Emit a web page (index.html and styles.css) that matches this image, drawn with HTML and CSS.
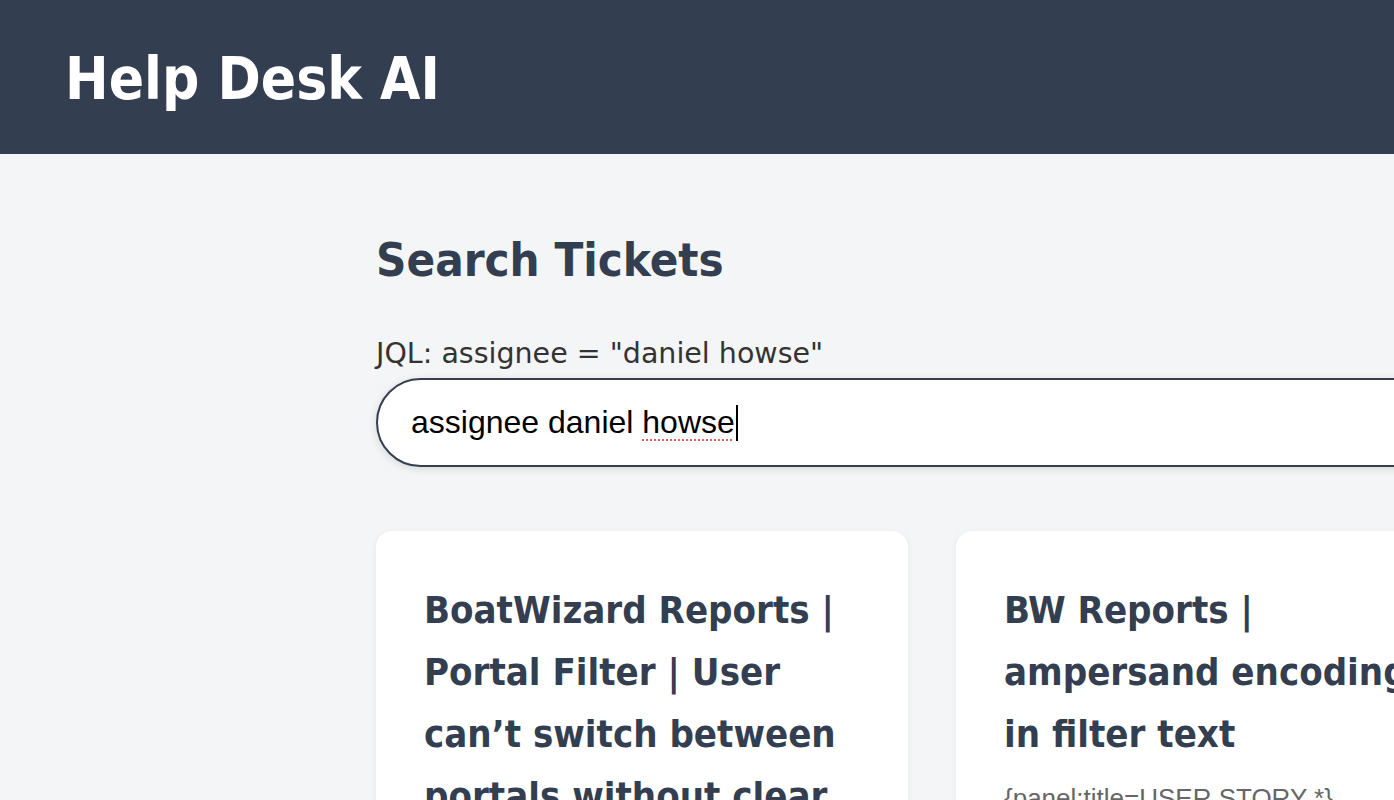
FILE: index.html
```html
<!DOCTYPE html>
<html lang="en">
<head>
<meta charset="utf-8">
<title>Help Desk AI</title>
<link rel="stylesheet" href="styles.css">
</head>
<body>
<header class="topbar">
  <h1 class="brand">Help Desk AI</h1>
</header>
<main class="content">
  <h2 class="page-title">Search Tickets</h2>
  <div class="jql">JQL: assignee = "daniel howse"</div>
  <div class="search">
    <span class="search-text">assignee daniel <span class="misspelled">howse</span></span><span class="caret"></span>
  </div>
  <section class="cards">
    <article class="card">
      <h3 class="card-title">BoatWizard Reports | Portal Filter | User can’t switch between portals without clear filters</h3>
      <p class="card-desc">Users cannot switch between portals while a filter is applied.</p>
    </article>
    <article class="card">
      <h3 class="card-title">BW Reports | ampersand encoding in filter text</h3>
      <p class="card-desc">{panel:title=USER STORY *}</p>
    </article>
  </section>
</main>
</body>
</html>
```
FILE: styles.css
```css
html, body {
  margin: 0;
  padding: 0;
  overflow: hidden;
  height: 800px;
}
body {
  background: #f4f5f7;
  font-family: "DejaVu Sans Condensed", "DejaVu Sans", sans-serif;
  color: #333e50;
}
.topbar {
  background: #333e50;
  height: 154px;
  padding: 0 65px;
  display: flex;
  align-items: center;
}
.brand {
  margin: 0;
  color: #ffffff;
  font-size: 58px;
  font-weight: bold;
  line-height: 1;
  padding-top: 4px;
}
.content {
  padding: 0 0 0 376px;
  width: 1200px;
}
.page-title {
  margin: 0;
  padding-top: 76px;
  font-size: 47px;
  line-height: 60px;
  font-weight: bold;
  color: #333e50;
}
.jql {
  margin-top: 46px;
  font-family: "DejaVu Sans", sans-serif;
  font-size: 28.5px;
  line-height: 36px;
  color: #333333;
}
.search {
  margin-top: 6px;
  height: 85px;
  border: 2px solid #333e50;
  border-radius: 46px;
  background: #ffffff;
  box-shadow: 0 2px 8px rgba(0, 0, 0, 0.12);
  display: flex;
  align-items: center;
  padding-left: 33px;
  width: 1100px;
}
.search-text {
  font-family: "Liberation Sans", Arial, sans-serif;
  font-size: 32px;
  color: #000000;
}
.misspelled {
  text-decoration: underline dotted #e06060;
  text-underline-offset: 6px;
  text-decoration-thickness: 2px;
}
.caret {
  display: inline-block;
  width: 2px;
  height: 36px;
  background: #000000;
  margin-left: 1px;
}
.cards {
  margin-top: 64px;
  display: grid;
  grid-template-columns: 532px 532px;
  gap: 48px;
}
.card {
  background: #ffffff;
  border-radius: 16px;
  box-shadow: 0 1px 6px rgba(0, 0, 0, 0.06);
  padding: 48px;
  height: 600px;
}
.card-title {
  margin: 0 0 13px;
  font-size: 38px;
  line-height: 62px;
  font-weight: bold;
  color: #333e50;
}
.card-desc {
  margin: 0;
  font-family: "Liberation Sans", Arial, sans-serif;
  font-size: 26px;
  line-height: 40px;
  color: #666666;
}
```
